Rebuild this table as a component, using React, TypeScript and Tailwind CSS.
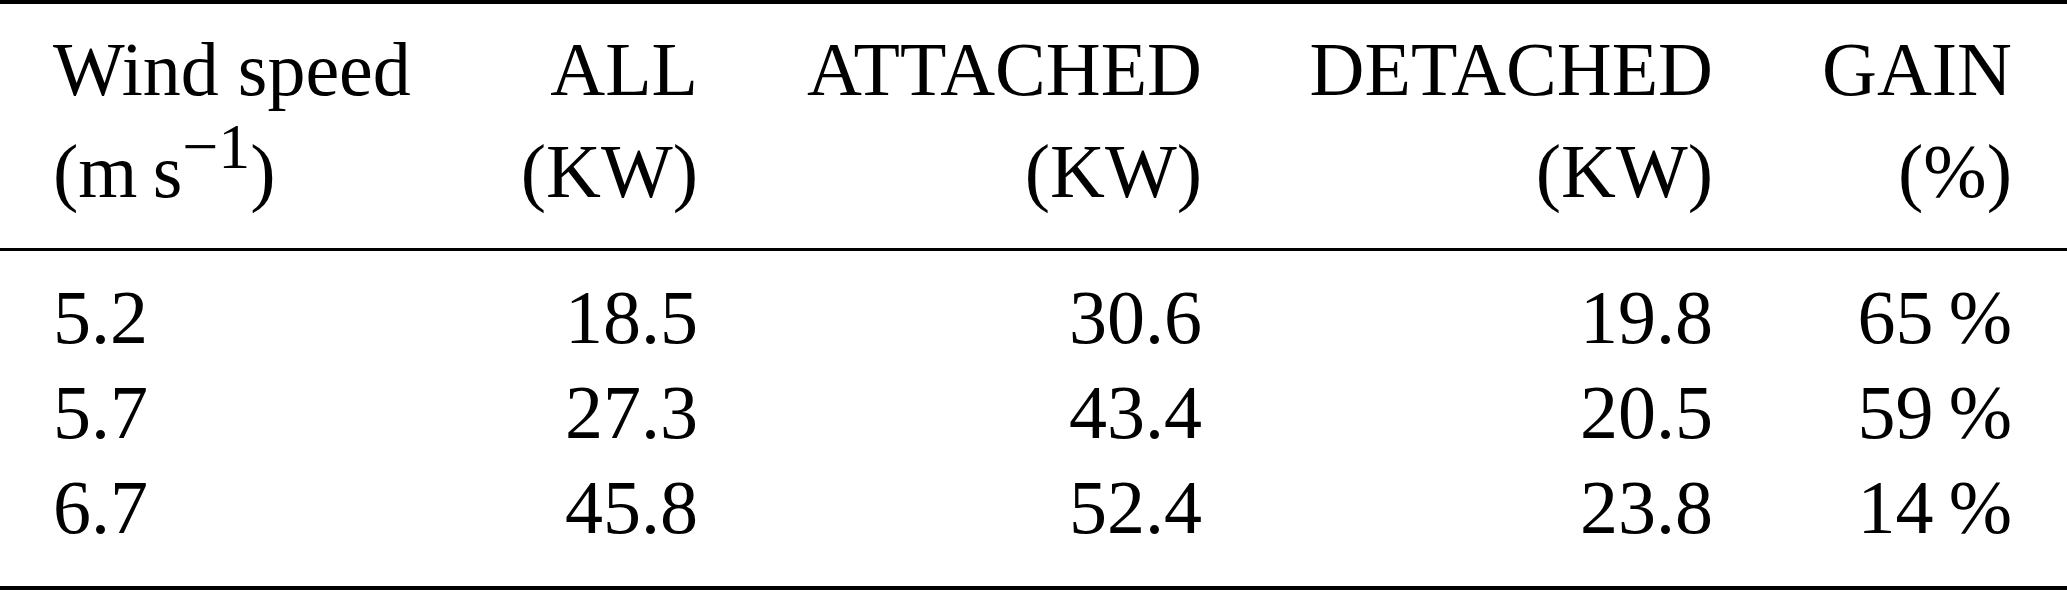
const cols = "grid grid-cols-[447px_198px_504px_511px_299px] pl-[53px]";

const rows = [
  ["5.2", "18.5", "30.6", "19.8", "65"],
  ["5.7", "27.3", "43.4", "20.5", "59"],
  ["6.7", "45.8", "52.4", "23.8", "14"],
];

// Header cell with two stacked lines, right aligned unless told otherwise
function Head({ top, bottom, left = false }: { top: React.ReactNode; bottom: React.ReactNode; left?: boolean }) {
  return (
    <div className={left ? "text-left" : "text-right"}>
      <div className="whitespace-nowrap">{top}</div>
      <div className="whitespace-nowrap">{bottom}</div>
    </div>
  );
}

export default function App() {
  return (
    <div className="w-[2067px] h-[590px] bg-white text-black font-['Liberation_Serif','Times_New_Roman',serif] text-[76px]">
      {/* top rule */}
      <div className="h-[4px] bg-black" />

      {/* Header */}
      <div className={`${cols} pt-[14px] pb-[26px] leading-[102px]`}>
        <Head
          left
          top="Wind speed"
          bottom={
            <>
              (m{"\u2009"}s
              <span className="relative -top-[29px] text-[64px] leading-none">{"\u2212"}1</span>)
            </>
          }
        />
        <Head top="ALL" bottom="(KW)" />
        <Head top="ATTACHED" bottom="(KW)" />
        <Head top="DETACHED" bottom="(KW)" />
        <Head top="GAIN" bottom="(%)" />
      </div>

      {/* mid rule */}
      <div className="h-[3px] bg-black" />

      {/* Body */}
      <div className="pt-[19px] pb-[31px] leading-[95px]">
        {rows.map((r, i) => (
          <div key={i} className={cols}>
            <div className="text-left">{r[0]}</div>
            <div className="text-right">{r[1]}</div>
            <div className="text-right">{r[2]}</div>
            <div className="text-right">{r[3]}</div>
            <div className="text-right whitespace-nowrap">
              {r[4]}
              {"\u2009"}%
            </div>
          </div>
        ))}
      </div>

      {/* bottom rule */}
      <div className="h-[4px] bg-black" />
    </div>
  );
}
